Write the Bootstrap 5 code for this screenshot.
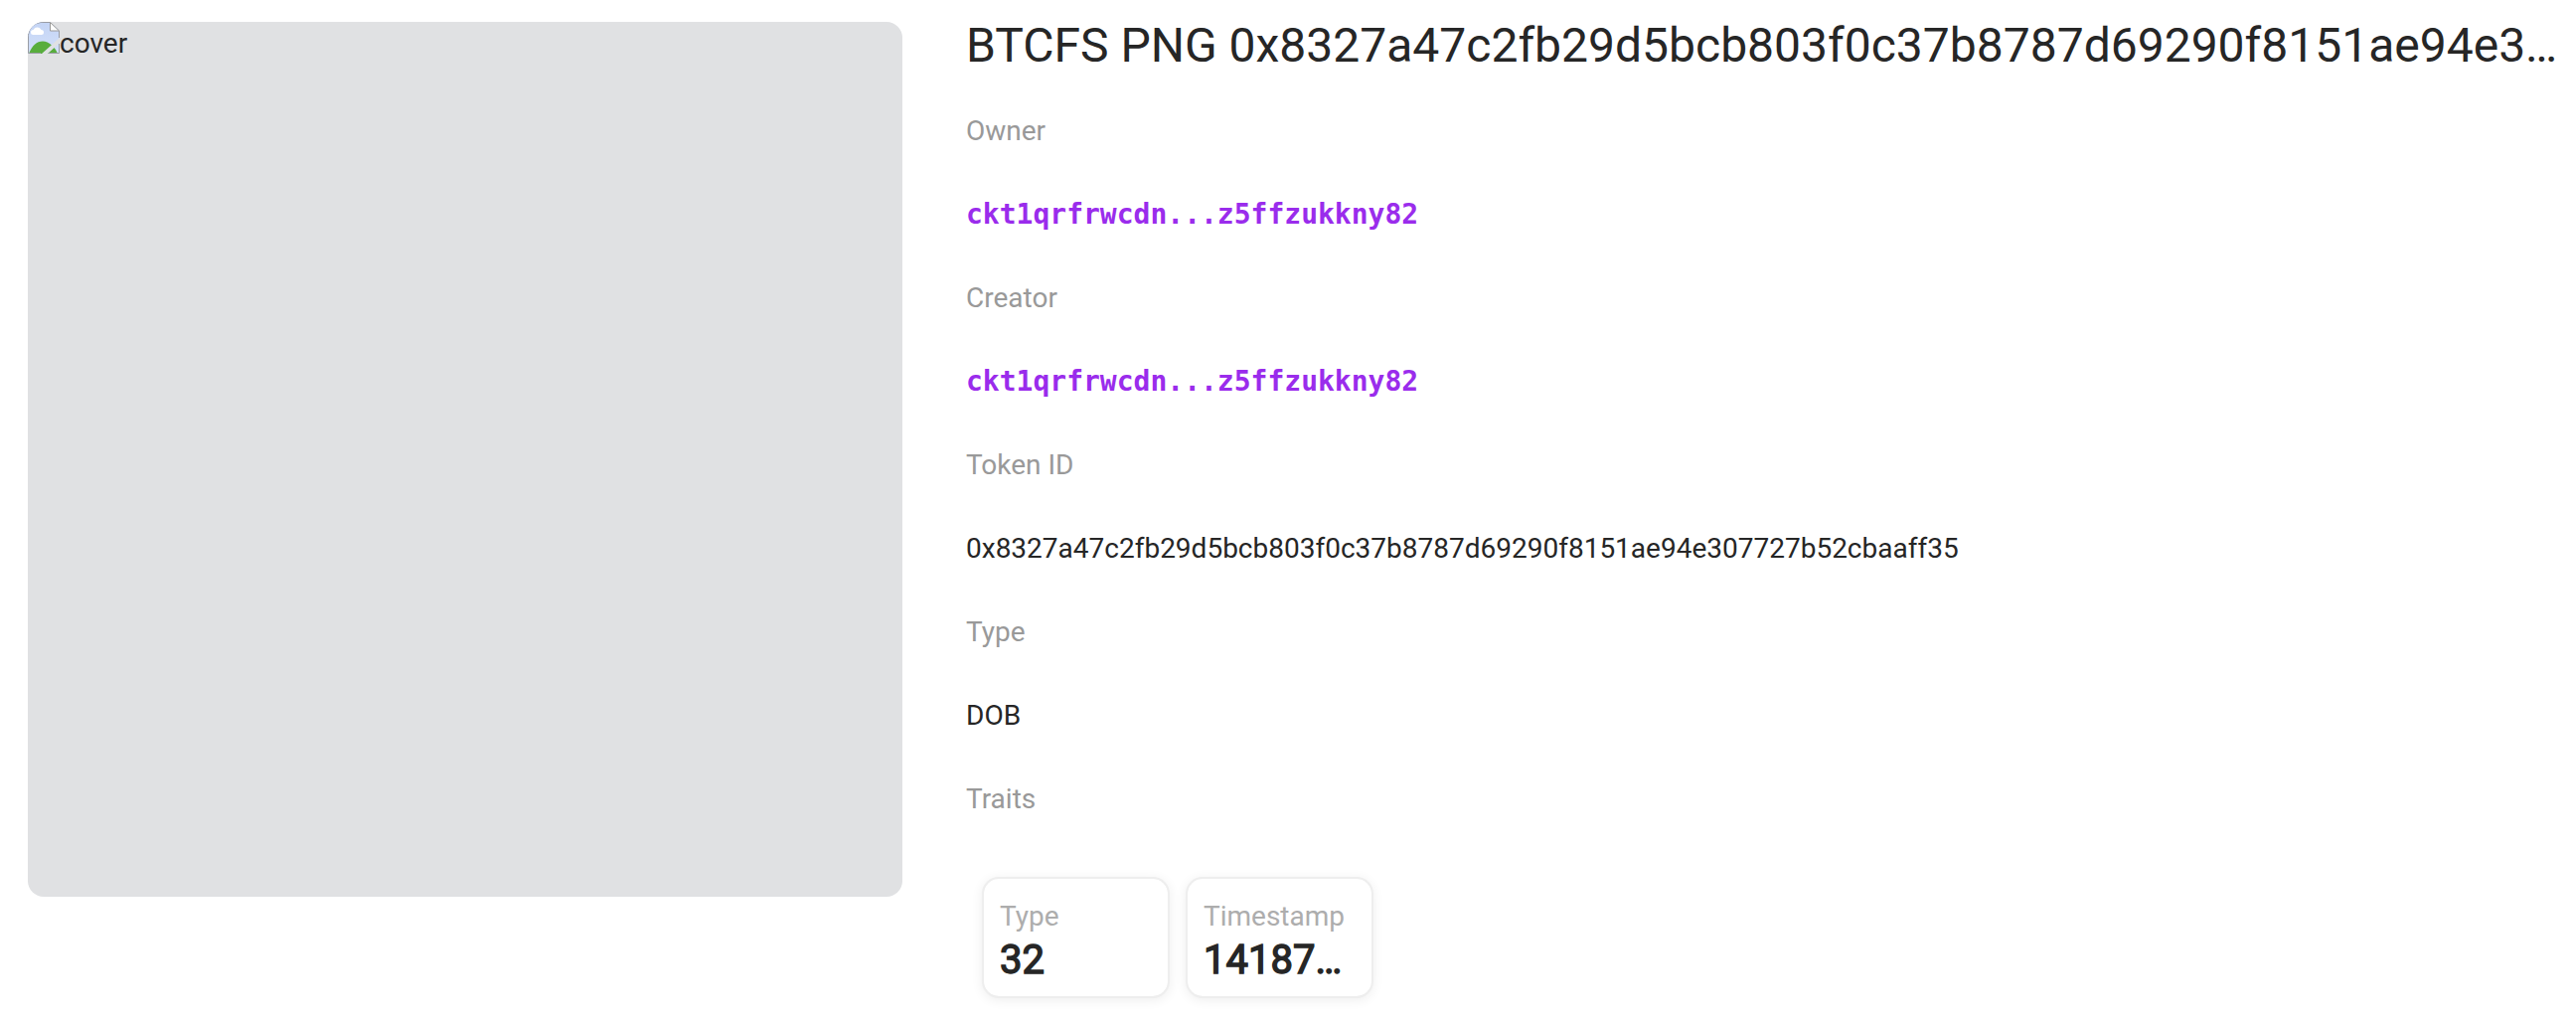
<!DOCTYPE html>
<html lang="en">
<head>
<meta charset="utf-8">
<title>BTCFS PNG</title>
<link href="https://cdn.jsdelivr.net/npm/bootstrap@5.3.0/dist/css/bootstrap.min.css" rel="stylesheet">
<style>
body{font-family:Roboto,sans-serif;font-size:28px;line-height:44px;color:#262626;background:#fff}
.nft-page{height:1030px;padding:22px 16px 0 28px;gap:64px}
.cover-box{width:880px;height:880px;border-radius:16px;background:#e0e1e3}
.cover-box svg{width:32px;height:32px}
.nft-title{font-size:48px;line-height:58px;font-weight:400;margin:-5px 0 35px}
.info-list{gap:40px}
.info-label{color:#999}
.addr{font-family:"DejaVu Sans Mono",monospace;font-weight:700;color:#9a2cec;text-decoration:none}
.trait-list{gap:20px;padding:58px 18px 20px}
.trait{width:185px;height:118px;border-radius:15px;padding:16px;box-shadow:0 0 0 2px #eeeeee,0 2px 12px 2px rgba(0,0,0,.07)}
.trait-name{color:#adadad}
.trait-value{font-size:40px;line-height:43px;font-weight:400;-webkit-text-stroke:1.4px #262626}
</style>
<script src="https://cdn.jsdelivr.net/npm/bootstrap@5.3.0/dist/js/bootstrap.bundle.min.js"></script>
</head>
<body>
<main class="nft-page d-flex align-items-start">
  <div class="cover-box d-flex align-items-start overflow-hidden flex-shrink-0">
    <svg viewBox="0 0 32 32" aria-hidden="true">
      <defs><linearGradient id="sky" x1="0" y1="0" x2="0" y2="1"><stop offset="0" stop-color="#c3d4f5"/><stop offset="1" stop-color="#d3e0f9"/></linearGradient>
      <clipPath id="pic"><path d="M0 0H22L32 9V16L14 32H0ZM32 21V32H20Z"/></clipPath></defs>
      <g clip-path="url(#pic)">
        <path d="M0 0H32V32H0Z" fill="url(#sky)"/>
        <path d="M1 32C4 24 9 19.500 15 19.500S28 26 30 32Z" fill="#58ad3c"/>
        <path d="M5.500 13a2.500 2.500 0 0 1 0-5 4.500 4.500 0 0 1 8 0 2.500 2.500 0 0 1 0 5Z" fill="#fff"/>
      </g>
      <path d="M22.500 .5V9H31.500Z" fill="#fff" stroke="#999" stroke-width="1"/>
      <path d="M.5 12V31.500H13M.5 13Q2 2 13 .5H22.500M31.500 9V16M31.500 22V31.500H21" fill="none" stroke="#9a9da5" stroke-width="1"/>
    </svg>
    <span>cover</span>
  </div>
  <section class="flex-fill">
    <h1 class="nft-title text-nowrap">BTCFS PNG 0x8327a47c2fb29d5bcb803f0c37b8787d69290f8151ae94e3…</h1>
    <div class="info-list d-flex flex-column">
      <div class="info-label">Owner</div>
      <div><a class="addr d-block" href="#">ckt1qrfrwcdn...z5ffzukkny82</a></div>
      <div class="info-label">Creator</div>
      <div><a class="addr d-block" href="#">ckt1qrfrwcdn...z5ffzukkny82</a></div>
      <div class="info-label">Token ID</div>
      <div>0x8327a47c2fb29d5bcb803f0c37b8787d69290f8151ae94e307727b52cbaaff35</div>
      <div class="info-label">Type</div>
      <div>DOB</div>
      <div class="info-label">Traits</div>
    </div>
    <div class="trait-list d-flex">
      <div class="trait"><div class="trait-name">Type</div><div class="trait-value">32</div></div>
      <div class="trait"><div class="trait-name">Timestamp</div><div class="trait-value">14187…</div></div>
    </div>
  </section>
</main>
</body>
</html>
